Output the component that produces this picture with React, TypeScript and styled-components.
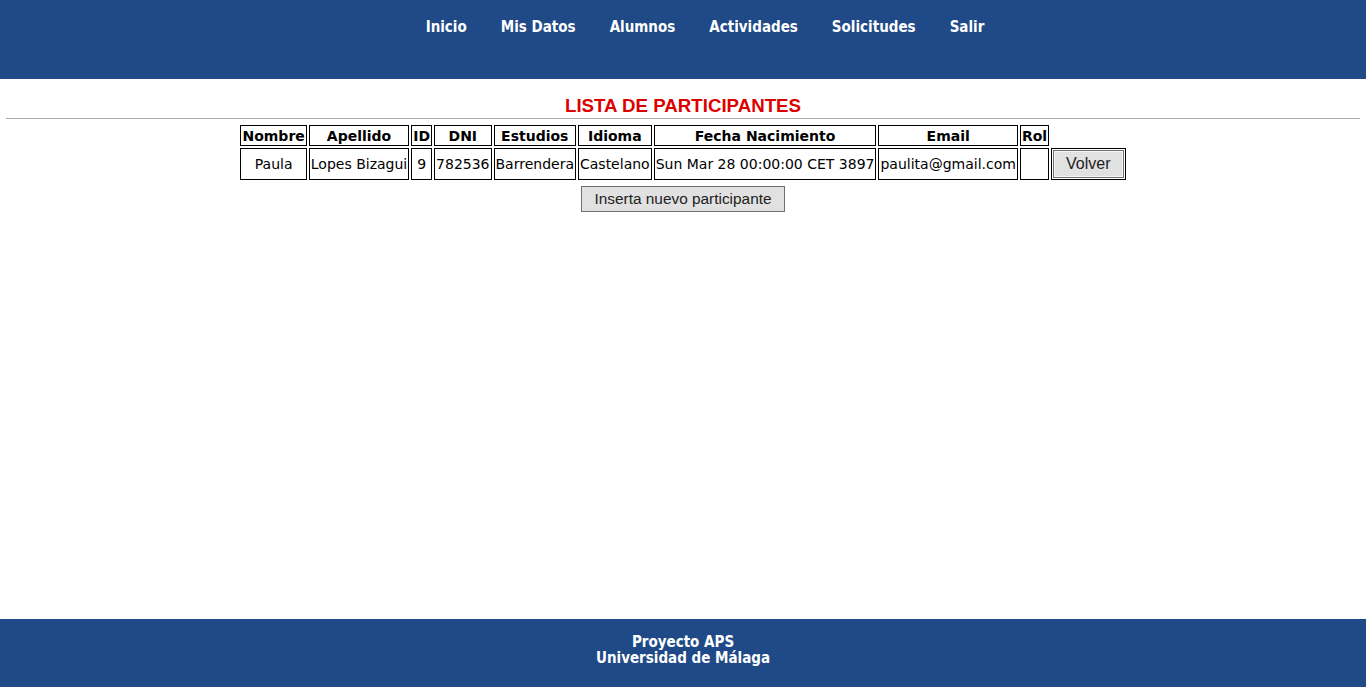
import React from 'react';
import styled, { createGlobalStyle } from 'styled-components';

const GlobalStyle = createGlobalStyle`
  html, body {
    margin: 0;
    padding: 0;
    background: #ffffff;
  }
  body {
    font-family: "DejaVu Sans", Verdana, sans-serif;
  }
`;

const Page = styled.div`
  display: flex;
  flex-direction: column;
  min-height: 100vh;
`;

const Header = styled.header`
  background: #204a87;
  height: 79px;
`;

const NavList = styled.ul`
  display: flex;
  justify-content: center;
  gap: 34px;
  list-style: none;
  margin: 0;
  padding: 18px 0 0 44px;
`;

const NavItem = styled.li`
  font-family: "DejaVu Sans Condensed", "DejaVu Sans", sans-serif;
  font-weight: bold;
  font-size: 15px;
  line-height: 18px;
  color: #ffffff;
  cursor: pointer;
`;

const Main = styled.main`
  padding: 0 6px;
  display: flex;
  flex-direction: column;
  align-items: center;
`;

const Title = styled.h3`
  margin: 0;
  padding-top: 16px;
  font-family: "Liberation Sans", Arial, sans-serif;
  font-size: 18.7px;
  line-height: 22px;
  font-weight: bold;
  color: #dd0000;
`;

const Rule = styled.hr`
  align-self: stretch;
  margin: 1px 0 4px;
  border: 0;
  height: 1px;
  background: #aaaaaa;
`;

const Table = styled.table`
  border-collapse: separate;
  border-spacing: 2px;
  font-size: 14px;
  color: #000000;
`;

const Th = styled.th`
  border: 1px solid #000000;
  padding: 0 1px;
  height: 19px;
  font-weight: bold;
  white-space: nowrap;
`;

const Td = styled.td`
  border: 1px solid #000000;
  padding: 1px 1px;
  text-align: center;
  white-space: nowrap;
`;

const Button = styled.button<{ $wide?: boolean }>`
  font-family: "Liberation Sans", Arial, sans-serif;
  font-size: ${p => (p.$wide ? '15.4px' : '16px')};
  color: #222222;
  background: #e1e1e1;
  border: 1px solid #707070;
  box-shadow: ${p => (p.$wide ? 'none' : 'inset 0 0 0 1px #f4f4f4')};
  padding: ${p => (p.$wide ? '3px 12px 3px' : '4px 12px 6px')};
  height: ${p => (p.$wide ? '26px' : '28px')};
  cursor: pointer;
`;

const Actions = styled.div`
  margin-top: 4px;
`;

const Footer = styled.footer`
  margin-top: auto;
  background: #204a87;
  height: 68px;
  box-sizing: border-box;
  padding-top: 15px;
  text-align: center;
  color: #ffffff;
  font-family: "DejaVu Sans Condensed", "DejaVu Sans", sans-serif;
  font-weight: bold;
  font-size: 15px;
  line-height: 16px;
`;

const navItems = ['Inicio', 'Mis Datos', 'Alumnos', 'Actividades', 'Solicitudes', 'Salir'];
const columns = ['Nombre', 'Apellido', 'ID', 'DNI', 'Estudios', 'Idioma', 'Fecha Nacimiento', 'Email', 'Rol'];

const participantes = [
  {
    nombre: 'Paula',
    apellido: 'Lopes Bizagui',
    id: '9',
    dni: '782536',
    estudios: 'Barrendera',
    idioma: 'Castelano',
    fecha: 'Sun Mar 28 00:00:00 CET 3897',
    email: 'paulita@gmail.com',
    rol: '',
  },
];

export default function App() {
  return (
    <Page>
      <GlobalStyle />
      <Header>
        <NavList>
          {navItems.map(item => (
            <NavItem key={item}>{item}</NavItem>
          ))}
        </NavList>
      </Header>
      <Main>
        <Title>LISTA DE PARTICIPANTES</Title>
        <Rule />
        <Table>
          <thead>
            <tr>
              {columns.map(c => (
                <Th key={c}>{c}</Th>
              ))}
            </tr>
          </thead>
          <tbody>
            {participantes.map(p => (
              <tr key={p.id}>
                <Td>{p.nombre}</Td>
                <Td>{p.apellido}</Td>
                <Td>{p.id}</Td>
                <Td>{p.dni}</Td>
                <Td>{p.estudios}</Td>
                <Td>{p.idioma}</Td>
                <Td>{p.fecha}</Td>
                <Td>{p.email}</Td>
                <Td>{p.rol}</Td>
                <Td>
                  <Button>Volver</Button>
                </Td>
              </tr>
            ))}
          </tbody>
        </Table>
        <Actions>
          <Button $wide>Inserta nuevo participante</Button>
        </Actions>
      </Main>
      <Footer>
        Proyecto APS
        <br />
        Universidad de Málaga
      </Footer>
    </Page>
  );
}
